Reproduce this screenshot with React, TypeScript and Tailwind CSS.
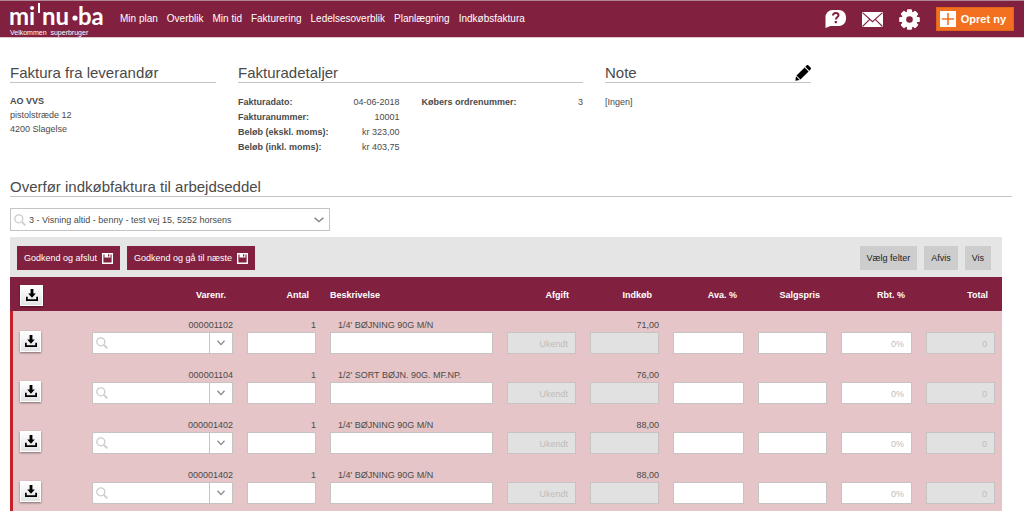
import type { ReactNode } from "react"

const navItems = [
    "Min plan",
    "Overblik",
    "Min tid",
    "Fakturering",
    "Ledelsesoverblik",
    "Planlægning",
    "Indkøbsfaktura",
]

const invoiceDetails = [
    { label: "Fakturadato:", value: "04-06-2018" },
    { label: "Fakturanummer:", value: "10001" },
    { label: "Beløb (ekskl. moms):", value: "kr 323,00" },
    { label: "Beløb (inkl. moms):", value: "kr 403,75" },
]

const lines = [
    { itemNo: "000001102", quantity: "1", description: "1/4' BØJNING 90G M/N", cost: "71,00" },
    { itemNo: "000001104", quantity: "1", description: "1/2' SORT BØJN. 90G. MF.NP.", cost: "76,00" },
    { itemNo: "000001402", quantity: "1", description: "1/4' BØJNING 90G M/N", cost: "88,00" },
    { itemNo: "000001402", quantity: "1", description: "1/4' BØJNING 90G M/N", cost: "88,00" },
]

const Logo = () => (
    <svg width="100" height="27" viewBox="0 0 100 27" role="img" aria-label="minuba" fill="#fff" className="overflow-visible">
        <g fontFamily="Lato, sans-serif" fontWeight="700" fontSize="24">
            <text x="-1" y="23">mi</text>
            <text x="32" y="23">nu</text>
            <text x="68" y="23">ba</text>
        </g>
        <rect x="28" y="1" width="2" height="10" />
        <circle cx="65" cy="16" r="2.6" />
    </svg>
)

const HelpIcon = () => (
    <svg width="21" height="18" viewBox="0 0 21 18">
        <path d="M7.5 0h6A7.2 7.2 0 0 1 21 7.5v1A7.2 7.2 0 0 1 13.500 16H5.500L0.500 18V7.500A7.200 7.200 0 0 1 7.500 0z" fill="#fff" />
        <path d="M7.900 5.600c0-1.700 1.200-2.600 2.800-2.600s2.800 .9 2.800 2.300c0 2-2.700 2-2.700 4.200" fill="none" stroke="#82213f" strokeWidth="2" />
        <rect x="9.700" y="11" width="2.200" height="2.200" fill="#82213f" />
    </svg>
)

const MailIcon = () => (
    <svg width="21" height="15" viewBox="0 0 21 15">
        <rect width="21" height="15" fill="#fff" />
        <path d="M0.500 0.700l10 9 10-9M0.500 14.500l7.200-7.200M20.500 14.500l-7.200-7.200" fill="none" stroke="#82213f" strokeWidth="1.100" />
    </svg>
)

const GearIcon = () => (
    <svg width="21" height="21" viewBox="-10.5 -10.5 21 21">
        <g fill="#fff">
            {[0, 45, 90, 135].map((angle) => (
                <rect key={angle} x="-2.600" y="-10.300" width="5.200" height="20.600" rx="1.200" transform={`rotate(${angle})`} />
            ))}
            <circle r="8" />
        </g>
        <circle r="3.300" fill="#82213f" />
    </svg>
)

const PencilIcon = () => (
    <svg width="16" height="16" viewBox="0 0 16 16">
        <path d="M0.300 15.700l0.700-4.400 3.700 3.700zM1.500 10.500l8.100-8.100 4 4-8.100 8.100zM10.300 1.700l1.200-1.200c.6-.6 1.400-.6 2 0l2 2c.6.6.6 1.400 0 2l-1.200 1.200z" />
    </svg>
)

const DownloadIcon = () => (
    <svg width="12" height="12" viewBox="0 0 11 11">
        <path d="M4.200 0h2.600v4.200h2.200L5.500 8 2 4.200h2.200z" />
        <path d="M0.800 7v3.200h9.400V7" fill="none" stroke="#000" strokeWidth="1.600" />
    </svg>
)

const SaveIcon = () => (
    <svg width="11" height="11" viewBox="0 0 11 11">
        <path d="M0.700 0.700h9.600v9.600H0.700z" fill="none" stroke="#fff" strokeWidth="1.400" />
        <path d="M2.500 0.500h6v4h-6z" fill="#fff" />
        <path d="M6 1.200h1.300v2.400H6z" fill="#82213f" />
    </svg>
)

const SearchIcon = () => (
    <svg width="12" height="12" viewBox="0 0 12 12" fill="none" stroke="#ccc" className="shrink-0">
        <circle cx="4.800" cy="4.800" r="4" strokeWidth="1.300" />
        <path d="M7.800 7.800l3.500 3.500" strokeWidth="1.800" />
    </svg>
)

const ChevronIcon = ({ wide = false }: { wide?: boolean }) => (
    <svg width={wide ? 10 : 8} height="6" viewBox="0 0 8 6" preserveAspectRatio="none" fill="none" stroke="#888" strokeWidth="1.300">
        <path d="M0.500 0.800L4 4.600l3.500-3.800" />
    </svg>
)

const SectionHeading = ({ children, action }: { children: ReactNode; action?: ReactNode }) => (
    <div className="flex justify-between border-b border-[#c4c4c4]">
        <h2 className="text-[15px] leading-[18px]">{children}</h2>
        {action}
    </div>
)

const DownloadButton = ({ label, className }: { label: string; className: string }) => (
    <button
        type="button"
        aria-label={label}
        className={`flex h-[21px] items-center justify-center border border-white bg-linear-to-b from-white to-[#e4e4e4] shadow-[0_1px_2px_rgba(0,0,0,0.45)] ${className}`}
    >
        <DownloadIcon />
    </button>
)

type FieldProps = {
    label: string
    text?: string
    placeholder?: string
    disabled?: boolean
    left?: boolean
}

const Field = ({ label, text, placeholder, disabled, left }: FieldProps) => (
    <td className="px-[7px] py-[7px]">
        <div className={`h-[14px] whitespace-nowrap ${left ? "pl-2 text-left" : "text-right"}`}>{text}</div>
        <input
            type="text"
            aria-label={label}
            placeholder={placeholder}
            disabled={disabled}
            className="block h-[22px] w-full border border-[#c6c3c3] bg-white px-[7px] pt-[2px] text-right placeholder:text-[#bdbdbd] disabled:bg-[#e1e1e1]"
        />
    </td>
)

const Header = () => (
    <header className="flex h-[38px] items-center border-t border-b border-t-[#b08895] border-b-[#dfc3cd] bg-[#82213f] px-[10px] text-white">
        <div className="w-[110px]">
            <Logo />
            <p className="text-[7px] leading-[8px] whitespace-pre">Velkommen  superbruger</p>
        </div>
        <nav className="flex gap-[9px] text-[10px] leading-[14px]">
            {navItems.map((item) => (
                <a key={item} href="#" className="whitespace-nowrap">{item}</a>
            ))}
        </nav>
        <div className="ml-auto flex items-center gap-4">
            <button type="button" aria-label="Hjælp"><HelpIcon /></button>
            <button type="button" aria-label="Beskeder"><MailIcon /></button>
            <button type="button" aria-label="Indstillinger"><GearIcon /></button>
            <button type="button" className="flex h-6 items-center gap-[5px] border border-[#e0651a] bg-[#f37021] pr-[7px] pl-[3px] text-[11px] font-bold whitespace-nowrap">
                <svg width="16" height="16" viewBox="0 0 16 16">
                    <rect width="16" height="16" fill="#fff" />
                    <path d="M8 2v12M2 8h12" stroke="#f37021" strokeWidth="1.600" />
                </svg>
                Opret ny
            </button>
        </div>
    </header>
)

const InvoiceInfo = () => (
    <div className="grid grid-cols-[206fr_345fr_206fr_179fr] gap-[22px]">
        <section>
            <SectionHeading>Faktura fra leverandør</SectionHeading>
            <address className="mt-[11px] leading-[14px] not-italic">
                <strong className="block">AO VVS</strong>
                pistolstræde 12<br />
                4200 Slagelse
            </address>
        </section>
        <section>
            <SectionHeading>Fakturadetaljer</SectionHeading>
            <div className="mt-3 grid grid-cols-2 gap-[22px] leading-[15px]">
                <dl>
                    {invoiceDetails.map(({ label, value }) => (
                        <div key={label} className="flex justify-between">
                            <dt className="font-bold">{label}</dt>
                            <dd>{value}</dd>
                        </div>
                    ))}
                </dl>
                <dl>
                    <div className="flex justify-between">
                        <dt className="font-bold">Købers ordrenummer:</dt>
                        <dd>3</dd>
                    </div>
                </dl>
            </div>
        </section>
        <section>
            <SectionHeading action={<button type="button" aria-label="Rediger note"><PencilIcon /></button>}>
                Note
            </SectionHeading>
            <p className="mt-3 leading-[15px]">[Ingen]</p>
        </section>
    </div>
)

const Toolbar = () => (
    <div className="flex h-10 items-end bg-[#e5e5e5] pr-[11px] pb-[7px] pl-[7px]">
        <div className="flex gap-[7px] text-white">
            {["Godkend og afslut", "Godkend og gå til næste"].map((label) => (
                <button key={label} type="button" className="flex h-6 items-center gap-[5px] bg-[#82213f] px-[7px] pt-px whitespace-nowrap">
                    {label}
                    <SaveIcon />
                </button>
            ))}
        </div>
        <div className="ml-auto flex gap-[7px] text-[#222]">
            {["Vælg felter", "Afvis", "Vis"].map((label) => (
                <button key={label} type="button" className="h-6 bg-[#cdcdcd] px-[7px] pt-px whitespace-nowrap">{label}</button>
            ))}
        </div>
    </div>
)

const LinesTable = () => (
    <table className="w-full table-fixed border-separate border-spacing-0">
        <colgroup>
            <col className="w-[75px]" />
            <col className="w-[155px]" />
            <col className="w-[83px]" />
            <col className="w-[177px]" />
            <col className="w-[83px]" />
            <col className="w-[83px]" />
            <col className="w-[85px]" />
            <col className="w-[83px]" />
            <col className="w-[85px]" />
            <col className="w-[83px]" />
        </colgroup>
        <thead>
            <tr className="h-[34px] bg-[#82213f] text-right leading-[14px] text-white">
                <td className="pt-[2px] pl-[10px]"><DownloadButton label="Overfør alle" className="w-[23px]" /></td>
                <th scope="col" className="pt-[2px] pr-[14px]">Varenr.</th>
                <th scope="col" className="pt-[2px] pr-[14px]">Antal</th>
                <th scope="col" className="pt-[2px] pl-[7px] text-left">Beskrivelse</th>
                <th scope="col" className="pt-[2px] pr-[14px]">Afgift</th>
                <th scope="col" className="pt-[2px] pr-[14px]">Indkøb</th>
                <th scope="col" className="pt-[2px] pr-[14px]">Ava. %</th>
                <th scope="col" className="pt-[2px] pr-[14px]">Salgspris</th>
                <th scope="col" className="pt-[2px] pr-[14px]">Rbt. %</th>
                <th scope="col" className="pt-[2px] pr-[14px]">Total</th>
            </tr>
        </thead>
        <tbody>
            {lines.map((line, index) => (
                <tr key={index} className="bg-[#e5c5c7] leading-[14px]">
                    <td className="border-l-[3px] border-[#c6202a] pl-[7px]">
                        <div className="pt-[10px]"><DownloadButton label={`Overfør linje ${index + 1}`} className="w-[21px]" /></div>
                    </td>
                    <td className="px-[7px]">
                        <div className="h-[14px] text-right">{line.itemNo}</div>
                        <div className="flex h-[22px] border border-[#c6c3c3] bg-white">
                            <label className="flex min-w-0 flex-1 items-center gap-1 pl-[3px]">
                                <SearchIcon />
                                <input type="text" aria-label="Varenr." className="w-full min-w-0" />
                            </label>
                            <button type="button" aria-label="Vis varer" className="flex w-[23px] items-center justify-center border-l border-[#c6c3c3]">
                                <ChevronIcon />
                            </button>
                        </div>
                    </td>
                    <Field label="Antal" text={line.quantity} />
                    <Field label="Beskrivelse" text={line.description} left />
                    <Field label="Afgift" placeholder="Ukendt" disabled />
                    <Field label="Indkøb" text={line.cost} disabled />
                    <Field label="Ava. %" />
                    <Field label="Salgspris" />
                    <Field label="Rbt. %" placeholder="0%" />
                    <Field label="Total" placeholder="0" disabled />
                </tr>
            ))}
        </tbody>
    </table>
)

const App = () => {
    return (
        <div className="bg-white font-['Liberation_Sans',Arial,sans-serif] text-[9px] text-[#4a4a4a]">
            <Header />
            <main className="pt-[26px] pr-3 pb-[9px] pl-[10px]">
                <InvoiceInfo />
                <div className="mt-[23px]">
                    <SectionHeading>Overfør indkøbfaktura til arbejdseddel</SectionHeading>
                </div>
                <div className="relative mt-[11px] w-80">
                    <select
                        aria-label="Arbejdseddel"
                        className="block h-[23px] w-full appearance-none border border-[#c4c4c4] bg-white pt-[2px] pr-6 pl-[18px]"
                    >
                        <option>3 - Visning altid - benny - test vej 15, 5252 horsens</option>
                    </select>
                    <span className="pointer-events-none absolute inset-y-0 left-1 flex items-center"><SearchIcon /></span>
                    <span className="pointer-events-none absolute inset-y-0 right-[6px] flex items-center"><ChevronIcon wide /></span>
                </div>
                <div className="mt-[6px] mr-[10px]">
                    <Toolbar />
                    <LinesTable />
                </div>
            </main>
        </div>
    )
}

export default App
